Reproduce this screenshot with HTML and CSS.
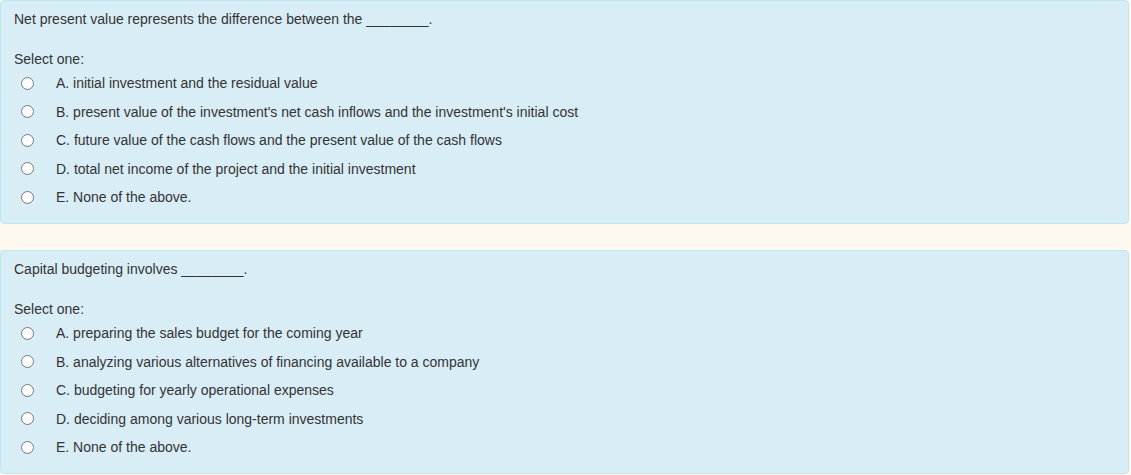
FILE: index.html
```html
<!DOCTYPE html>
<html>
<head>
<meta charset="utf-8">
<link rel="stylesheet" href="styles.css">
</head>
<body>
<div class="page">
  <div class="card">
    <div class="qtext">Net present value represents the difference between the ________.</div>
    <div class="prompt">Select one:</div>
    <div class="answers">
      <div class="opt"><span class="radio"></span><span class="label">A. initial investment and the residual value</span></div>
      <div class="opt"><span class="radio"></span><span class="label">B. present value of the investment's net cash inflows and the investment's initial cost</span></div>
      <div class="opt"><span class="radio"></span><span class="label">C. future value of the cash flows and the present value of the cash flows</span></div>
      <div class="opt"><span class="radio"></span><span class="label">D. total net income of the project and the initial investment</span></div>
      <div class="opt"><span class="radio"></span><span class="label">E. None of the above.</span></div>
    </div>
  </div>
  <div class="card">
    <div class="qtext">Capital budgeting involves ________.</div>
    <div class="prompt">Select one:</div>
    <div class="answers">
      <div class="opt"><span class="radio"></span><span class="label">A. preparing the sales budget for the coming year</span></div>
      <div class="opt"><span class="radio"></span><span class="label">B. analyzing various alternatives of financing available to a company</span></div>
      <div class="opt"><span class="radio"></span><span class="label">C. budgeting for yearly operational expenses</span></div>
      <div class="opt"><span class="radio"></span><span class="label">D. deciding among various long-term investments</span></div>
      <div class="opt"><span class="radio"></span><span class="label">E. None of the above.</span></div>
    </div>
  </div>
</div>
</body>
</html>
```
FILE: styles.css
```css
html, body {
  margin: 0;
  padding: 0;
  background: #fdf9ee;
}
body {
  font-family: "Liberation Sans", Arial, sans-serif;
  font-size: 14px;
  color: #333;
}
.page {
  display: flex;
  flex-direction: column;
  gap: 26px;
  width: 1129px;
}
.card {
  background: #d9edf7;
  border: 1px solid #bce8f1;
  border-radius: 4px;
  padding: 9px 13px 11.5px 13px;
}
.qtext {
  line-height: 18px;
}
.prompt {
  line-height: 18px;
  margin-top: 22px;
}
.answers {
  display: flex;
  flex-direction: column;
  margin-top: 1px;
}
.opt {
  display: flex;
  align-items: center;
  height: 28.5px;
}
.radio {
  width: 11px;
  height: 11px;
  border: 1px solid #7a7a7a;
  border-radius: 50%;
  background: radial-gradient(circle at 50% 30%, #ffffff 60%, #f0f0f0 100%);
  margin-left: 7px;
  margin-right: 22px;
  flex: none;
}
.label {
  line-height: 18px;
}
```
